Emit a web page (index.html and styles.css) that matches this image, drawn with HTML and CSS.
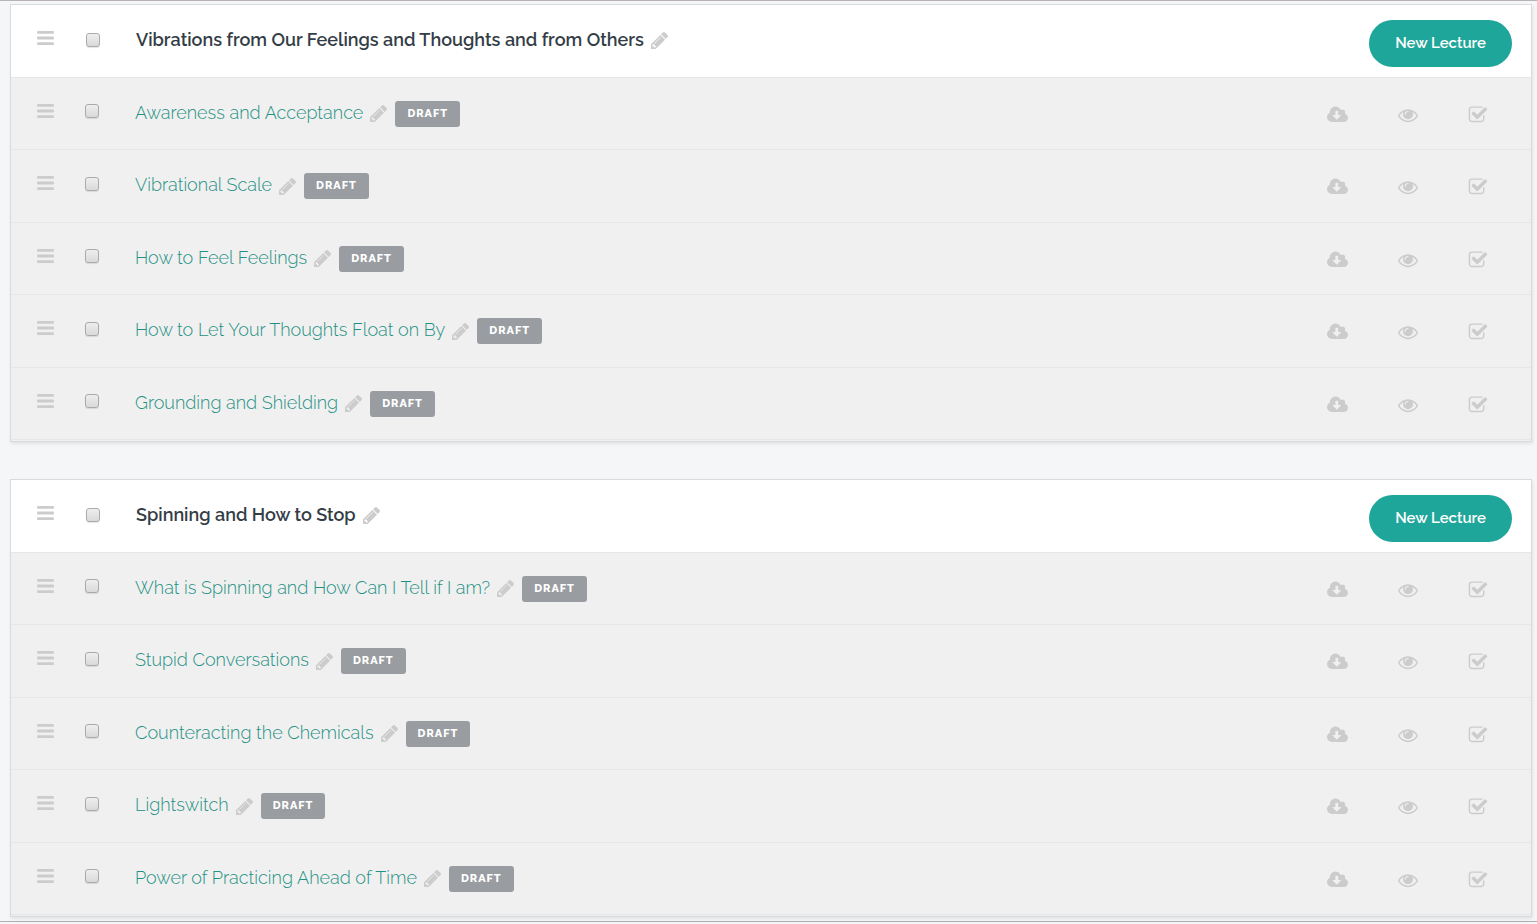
FILE: index.html
```html
<!DOCTYPE html>
<html lang="en">
<head>
    <meta charset="UTF-8">
    <title>Curriculum</title>
    <link rel="stylesheet" href="styles.css">
</head>
<body>
    <svg class="sprite" aria-hidden="true">
        <symbol id="bars" viewBox="128 256 1536 1280">
            <path d="M1664 1344v128q0 26-19 45t-45 19h-1408q-26 0-45-19t-19-45v-128q0-26 19-45t45-19h1408q26 0 45 19t19 45zm0-512v128q0 26-19 45t-45 19h-1408q-26 0-45-19t-19-45v-128q0-26 19-45t45-19h1408q26 0 45 19t19 45zm0-512v128q0 26-19 45t-45 19h-1408q-26 0-45-19t-19-45v-128q0-26 19-45t45-19h1408q26 0 45 19t19 45z"/>
        </symbol>
        <symbol id="pencil" viewBox="128 149 1515 1515">
            <path d="M491 1536l91-91-235-235-91 91v107h128v128h107zm523-928q0-22-22-22-10 0-17 7l-542 542q-7 7-7 17 0 22 22 22 10 0 17-7l542-542q7-7 7-17zm-54-192l416 416-832 832h-416v-416zm683 96q0 53-37 90l-166 166-416-416 166-165q36-38 90-38 53 0 91 38l235 234q37 39 37 91z"/>
        </symbol>
        <symbol id="cloud" viewBox="0 0 1920 1792">
            <path d="M1280 928q0-14-9-23t-23-9h-224v-352q0-13-9.5-22.5t-22.5-9.5h-192q-13 0-22.5 9.5t-9.5 22.5v352h-224q-13 0-22.5 9.5t-9.5 22.5q0 14 9 23l352 352q9 9 23 9t23-9l351-351q10-12 10-24zm640 224q0 159-112.5 271.5t-271.5 112.5h-1088q-185 0-316.5-131.5t-131.5-316.5q0-130 70-240t188-165q-2-30-2-43 0-212 150-362t362-150q156 0 285.5 87t188.5 231q71-62 166-62 106 0 181 75t75 181q0 76-41 138 130 31 213.5 135.5t83.5 238.5z"/>
        </symbol>
        <symbol id="eye" viewBox="0 0 1792 1792">
            <path d="M1664 960q-152-236-381-353 61 104 61 225 0 185-131.5 316.5t-316.5 131.5-316.5-131.5-131.5-316.5q0-121 61-225-229 117-381 353 133 205 333.5 326.5t434.5 121.5 434.5-121.5 333.5-326.5zm-720-384q0-20-14-34t-34-14q-125 0-214.5 89.5t-89.5 214.5q0 20 14 34t34 14 34-14 14-34q0-86 61-147t147-61q20 0 34-14t14-34zm848 384q0 34-20 69-140 230-376.5 368.5t-499.5 138.5-499.5-139-376.5-368q-20-35-20-69t20-69q140-229 376.5-368t499.5-139 499.5 139 376.5 368q20 35 20 69z"/>
        </symbol>
        <symbol id="check" viewBox="0 0 1792 1792">
            <path d="M1472 930v318q0 119-84.5 203.5t-203.5 84.5h-832q-119 0-203.5-84.5t-84.5-203.5v-832q0-119 84.5-203.5t203.5-84.5h832q63 0 117 25 15 7 18 23 3 17-9 29l-49 49q-10 10-23 10-3 0-9-2-23-6-45-6h-832q-66 0-113 47t-47 113v832q0 66 47 113t113 47h832q66 0 113-47t47-113v-254q0-13 9-22l64-64q10-10 23-10 6 0 12 3 20 8 20 29zm231-489l-814 814q-24 24-57 24t-57-24l-430-430q-24-24-24-57t24-57l110-110q24-24 57-24t57 24l263 263 647-647q24-24 57-24t57 24l110 110q24 24 24 57t-24 57z"/>
        </symbol>
    </svg>

    <main class="curriculum">
        <section class="section">
            <header class="section-header">
                <button class="icon-btn drag" aria-label="Move section"><svg><use href="#bars"/></svg></button>
                <input type="checkbox" class="select" aria-label="Select Vibrations from Our Feelings and Thoughts and from Others">
                <h2 class="section-title">Vibrations from Our Feelings and Thoughts and from Others</h2>
                <button class="icon-btn edit" aria-label="Edit section"><svg><use href="#pencil"/></svg></button>
                <button class="new-lecture">New Lecture</button>
            </header>
            <ul class="lectures">
                <li class="lecture">
                    <button class="icon-btn drag" aria-label="Move lecture"><svg><use href="#bars"/></svg></button>
                    <input type="checkbox" class="select" aria-label="Select Awareness and Acceptance">
                    <a href="#" class="lecture-title">Awareness and Acceptance</a>
                    <button class="icon-btn edit" aria-label="Edit lecture"><svg><use href="#pencil"/></svg></button>
                    <span class="badge">DRAFT</span>
                    <div class="actions">
                        <button class="icon-btn cloud" aria-label="Downloadable"><svg><use href="#cloud"/></svg></button>
                        <button class="icon-btn" aria-label="Preview"><svg><use href="#eye"/></svg></button>
                        <button class="icon-btn" aria-label="Published"><svg><use href="#check"/></svg></button>
                    </div>
                </li>
                <li class="lecture">
                    <button class="icon-btn drag" aria-label="Move lecture"><svg><use href="#bars"/></svg></button>
                    <input type="checkbox" class="select" aria-label="Select Vibrational Scale">
                    <a href="#" class="lecture-title">Vibrational Scale</a>
                    <button class="icon-btn edit" aria-label="Edit lecture"><svg><use href="#pencil"/></svg></button>
                    <span class="badge">DRAFT</span>
                    <div class="actions">
                        <button class="icon-btn cloud" aria-label="Downloadable"><svg><use href="#cloud"/></svg></button>
                        <button class="icon-btn" aria-label="Preview"><svg><use href="#eye"/></svg></button>
                        <button class="icon-btn" aria-label="Published"><svg><use href="#check"/></svg></button>
                    </div>
                </li>
                <li class="lecture">
                    <button class="icon-btn drag" aria-label="Move lecture"><svg><use href="#bars"/></svg></button>
                    <input type="checkbox" class="select" aria-label="Select How to Feel Feelings">
                    <a href="#" class="lecture-title">How to Feel Feelings</a>
                    <button class="icon-btn edit" aria-label="Edit lecture"><svg><use href="#pencil"/></svg></button>
                    <span class="badge">DRAFT</span>
                    <div class="actions">
                        <button class="icon-btn cloud" aria-label="Downloadable"><svg><use href="#cloud"/></svg></button>
                        <button class="icon-btn" aria-label="Preview"><svg><use href="#eye"/></svg></button>
                        <button class="icon-btn" aria-label="Published"><svg><use href="#check"/></svg></button>
                    </div>
                </li>
                <li class="lecture">
                    <button class="icon-btn drag" aria-label="Move lecture"><svg><use href="#bars"/></svg></button>
                    <input type="checkbox" class="select" aria-label="Select How to Let Your Thoughts Float on By">
                    <a href="#" class="lecture-title">How to Let Your Thoughts Float on By</a>
                    <button class="icon-btn edit" aria-label="Edit lecture"><svg><use href="#pencil"/></svg></button>
                    <span class="badge">DRAFT</span>
                    <div class="actions">
                        <button class="icon-btn cloud" aria-label="Downloadable"><svg><use href="#cloud"/></svg></button>
                        <button class="icon-btn" aria-label="Preview"><svg><use href="#eye"/></svg></button>
                        <button class="icon-btn" aria-label="Published"><svg><use href="#check"/></svg></button>
                    </div>
                </li>
                <li class="lecture">
                    <button class="icon-btn drag" aria-label="Move lecture"><svg><use href="#bars"/></svg></button>
                    <input type="checkbox" class="select" aria-label="Select Grounding and Shielding">
                    <a href="#" class="lecture-title">Grounding and Shielding</a>
                    <button class="icon-btn edit" aria-label="Edit lecture"><svg><use href="#pencil"/></svg></button>
                    <span class="badge">DRAFT</span>
                    <div class="actions">
                        <button class="icon-btn cloud" aria-label="Downloadable"><svg><use href="#cloud"/></svg></button>
                        <button class="icon-btn" aria-label="Preview"><svg><use href="#eye"/></svg></button>
                        <button class="icon-btn" aria-label="Published"><svg><use href="#check"/></svg></button>
                    </div>
                </li>
            </ul>
        </section>

        <section class="section">
            <header class="section-header">
                <button class="icon-btn drag" aria-label="Move section"><svg><use href="#bars"/></svg></button>
                <input type="checkbox" class="select" aria-label="Select Spinning and How to Stop">
                <h2 class="section-title">Spinning and How to Stop</h2>
                <button class="icon-btn edit" aria-label="Edit section"><svg><use href="#pencil"/></svg></button>
                <button class="new-lecture">New Lecture</button>
            </header>
            <ul class="lectures">
                <li class="lecture">
                    <button class="icon-btn drag" aria-label="Move lecture"><svg><use href="#bars"/></svg></button>
                    <input type="checkbox" class="select" aria-label="Select What is Spinning and How Can I Tell if I am?">
                    <a href="#" class="lecture-title">What is Spinning and How Can I Tell if I am?</a>
                    <button class="icon-btn edit" aria-label="Edit lecture"><svg><use href="#pencil"/></svg></button>
                    <span class="badge">DRAFT</span>
                    <div class="actions">
                        <button class="icon-btn cloud" aria-label="Downloadable"><svg><use href="#cloud"/></svg></button>
                        <button class="icon-btn" aria-label="Preview"><svg><use href="#eye"/></svg></button>
                        <button class="icon-btn" aria-label="Published"><svg><use href="#check"/></svg></button>
                    </div>
                </li>
                <li class="lecture">
                    <button class="icon-btn drag" aria-label="Move lecture"><svg><use href="#bars"/></svg></button>
                    <input type="checkbox" class="select" aria-label="Select Stupid Conversations">
                    <a href="#" class="lecture-title">Stupid Conversations</a>
                    <button class="icon-btn edit" aria-label="Edit lecture"><svg><use href="#pencil"/></svg></button>
                    <span class="badge">DRAFT</span>
                    <div class="actions">
                        <button class="icon-btn cloud" aria-label="Downloadable"><svg><use href="#cloud"/></svg></button>
                        <button class="icon-btn" aria-label="Preview"><svg><use href="#eye"/></svg></button>
                        <button class="icon-btn" aria-label="Published"><svg><use href="#check"/></svg></button>
                    </div>
                </li>
                <li class="lecture">
                    <button class="icon-btn drag" aria-label="Move lecture"><svg><use href="#bars"/></svg></button>
                    <input type="checkbox" class="select" aria-label="Select Counteracting the Chemicals">
                    <a href="#" class="lecture-title">Counteracting the Chemicals</a>
                    <button class="icon-btn edit" aria-label="Edit lecture"><svg><use href="#pencil"/></svg></button>
                    <span class="badge">DRAFT</span>
                    <div class="actions">
                        <button class="icon-btn cloud" aria-label="Downloadable"><svg><use href="#cloud"/></svg></button>
                        <button class="icon-btn" aria-label="Preview"><svg><use href="#eye"/></svg></button>
                        <button class="icon-btn" aria-label="Published"><svg><use href="#check"/></svg></button>
                    </div>
                </li>
                <li class="lecture">
                    <button class="icon-btn drag" aria-label="Move lecture"><svg><use href="#bars"/></svg></button>
                    <input type="checkbox" class="select" aria-label="Select Lightswitch">
                    <a href="#" class="lecture-title">Lightswitch</a>
                    <button class="icon-btn edit" aria-label="Edit lecture"><svg><use href="#pencil"/></svg></button>
                    <span class="badge">DRAFT</span>
                    <div class="actions">
                        <button class="icon-btn cloud" aria-label="Downloadable"><svg><use href="#cloud"/></svg></button>
                        <button class="icon-btn" aria-label="Preview"><svg><use href="#eye"/></svg></button>
                        <button class="icon-btn" aria-label="Published"><svg><use href="#check"/></svg></button>
                    </div>
                </li>
                <li class="lecture">
                    <button class="icon-btn drag" aria-label="Move lecture"><svg><use href="#bars"/></svg></button>
                    <input type="checkbox" class="select" aria-label="Select Power of Practicing Ahead of Time">
                    <a href="#" class="lecture-title">Power of Practicing Ahead of Time</a>
                    <button class="icon-btn edit" aria-label="Edit lecture"><svg><use href="#pencil"/></svg></button>
                    <span class="badge">DRAFT</span>
                    <div class="actions">
                        <button class="icon-btn cloud" aria-label="Downloadable"><svg><use href="#cloud"/></svg></button>
                        <button class="icon-btn" aria-label="Preview"><svg><use href="#eye"/></svg></button>
                        <button class="icon-btn" aria-label="Published"><svg><use href="#check"/></svg></button>
                    </div>
                </li>
            </ul>
        </section>
    </main>
</body>
</html>
```
FILE: styles.css
```css
* {
    box-sizing: border-box;
}
body {
    margin: 0;
    background-color: #f4f6f8;
    font-family: Raleway, Lato, sans-serif;
    color: #343d46;
}
.sprite {
    display: none;
}
.curriculum {
    display: flex;
    flex-direction: column;
    gap: 37px;
    padding: 3px 5px 4px 10px;
    border-top: 1px solid #b7b3b7;
    border-bottom: 1px solid #b0b0b0;
}
.section {
    background-color: #fff;
    border: 1px solid #d9dadc;
    box-shadow: 1px 2px 3px rgba(0, 0, 0, 0.08);
}
.section-header,
.lecture {
    display: flex;
    align-items: center;
    border-bottom: 1px solid #e6e6e6;
}
.section-header {
    min-height: 73px;
    padding: 0 19px 0 26px;
}
.lectures {
    list-style: none;
    margin: 0;
    padding: 0 0 1px;
    background-color: #f0f0f0;
}
.lecture {
    min-height: 72px;
    padding: 0 43px 0 26px;
}
.lecture:nth-child(even) {
    min-height: 73px;
}
.icon-btn {
    display: flex;
    padding: 0;
    border: 0;
    background: none;
    color: #ccc;
    cursor: pointer;
}
.icon-btn svg {
    width: 20px;
    height: 20px;
    fill: currentColor;
}
.drag {
    margin-bottom: 6px;
}
.drag svg {
    width: 17px;
    height: 14px;
}
.edit svg {
    width: 17px;
    height: 17px;
}
.section-header .edit {
    margin-bottom: 2px;
}
.cloud svg {
    width: 21px;
}
.select {
    appearance: none;
    width: 14px;
    height: 14px;
    margin: 0 36px 5px 31px;
    border: 1px solid #aaa;
    border-radius: 3px;
    background: linear-gradient(#eee, #d9d9d9);
    box-shadow: 0 1px 1px rgba(0, 0, 0, 0.1);
}
.section-header .select {
    margin-bottom: 2px;
    margin-left: 32px;
}
.section-title {
    margin: 0 7px 2px 0;
    font-size: 18px;
    font-weight: 600;
    line-height: 24px;
}
.lecture-title {
    margin: 0 7px 2px 0;
    color: #1f9184;
    font-size: 18px;
    font-weight: 300;
    line-height: 24px;
    text-decoration: none;
}
.badge {
    margin-left: 8px;
    padding: 0 12px;
    border-radius: 3px;
    background-color: #999ca1;
    color: #fff;
    font-size: 11px;
    font-weight: 800;
    letter-spacing: 1px;
    line-height: 26px;
}
.actions {
    display: flex;
    gap: 50px;
    margin: 2px 0 0 auto;
}
.new-lecture {
    margin: 4px 0 0 auto;
    padding: 0 26px;
    border: 0;
    border-radius: 24px;
    background-color: #1fa69a;
    color: #fff;
    font-family: inherit;
    font-size: 15px;
    font-weight: 600;
    line-height: 47px;
    cursor: pointer;
}
```
